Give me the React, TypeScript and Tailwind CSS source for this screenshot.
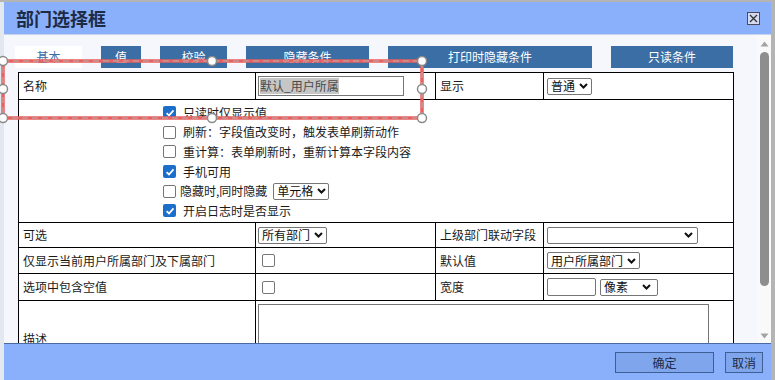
import React from 'react';

const Check: React.FC<{ on?: boolean }> = ({ on }) =>
    on ? (
        <span className="w-[13px] h-[13px] rounded-[2px] bg-[#1b6ec9] flex items-center justify-center shrink-0">
            <svg width="10" height="10" viewBox="0 0 10 10">
                <path d="M1.6 5.2 L4 7.5 L8.5 2.4" stroke="white" strokeWidth="1.8" fill="none" />
            </svg>
        </span>
    ) : (
        <span className="block w-[13px] h-[13px] rounded-[2px] bg-white border border-[#767676] shrink-0" />
    );

const Chevron: React.FC = () => (
    <svg width="9" height="6" viewBox="0 0 9 6" className="shrink-0">
        <path d="M1 1 L4.5 4.5 L8 1" stroke="#111" strokeWidth="2" fill="none" />
    </svg>
);

const Select: React.FC<{ label?: string; className?: string }> = ({ label, className }) => (
    <div className={`h-[17px] shrink-0 flex items-center justify-between gap-1 pl-[3px] pr-[4px] bg-white border border-[#767676] rounded-[2px] text-[12px] leading-none whitespace-nowrap text-[#111] ${className ?? ''}`}>
        <span>{label}</span>
        <Chevron />
    </div>
);

const tabs = [
    { t: '值', w: 'w-[40px]' },
    { t: '校验', w: 'w-[67px]' },
    { t: '隐藏条件', w: 'w-[123px]' },
    { t: '打印时隐藏条件', w: 'w-[204px]' },
    { t: '只读条件', w: 'w-[122px]' },
];

const SelectionOverlay: React.FC = () => {
    const handles = [
        [3, 61], [212, 61], [422, 61],
        [3, 89], [422, 89],
        [3, 118], [212, 118], [422, 118],
    ];
    return (
        <svg className="absolute inset-0 pointer-events-none" width="775" height="380">
            <rect x="3" y="61" width="419" height="57" fill="none" stroke="#e8605f" strokeWidth="3.5" />
            <rect x="3" y="61" width="419" height="57" fill="none" stroke="#b4b4b4" strokeWidth="1" strokeDasharray="6 4" />
            {handles.map(([x, y]) => (
                <circle key={`${x}-${y}`} cx={x} cy={y} r="4.5" fill="white" stroke="#8a8a8a" strokeWidth="1.5" />
            ))}
        </svg>
    );
};

const App: React.FC = () => {
    return (
        <div className="relative w-[775px] h-[380px] overflow-hidden bg-[#b4b4b4] font-['Noto_Sans_CJK_SC','Noto_Sans',sans-serif]">
            <div className="flex h-[378px] mt-[2px]">
                <div className="w-[4px] bg-[#e3e8f0]" />
                <div className="flex-1 flex flex-col">
                    {/* Header */}
                    <div className="h-[33px] shrink-0 flex items-center justify-between pl-[12px] pr-[11px] bg-[#8ab0fb] border-b border-[#c8d4ec]">
                        <span className="text-[18px] font-bold text-[#1e2b45] leading-none">部门选择框</span>
                        <span className="w-[13px] h-[13px] border border-[#4a4a5a] bg-[#d5daf0] flex items-center justify-center">
                            <svg width="9" height="9" viewBox="0 0 9 9">
                                <path d="M1 1 L8 8 M8 1 L1 8" stroke="#333" strokeWidth="1.3" />
                            </svg>
                        </span>
                    </div>

                    {/* Body */}
                    <div className="h-[308px] shrink-0 flex bg-[#f5f7fc]">
                        <div className="flex-1 overflow-hidden pt-[11px]">
                            <div className="flex gap-[19px] pl-[11px] h-[22px]">
                                <div className="w-[67px] bg-white flex items-center justify-center text-[12px] text-[#3a6ea5]">基本</div>
                                {tabs.map((tab) => (
                                    <div key={tab.t} className={`${tab.w} bg-[#3a6ea5] flex items-center justify-center text-[12px] text-white`}>
                                        {tab.t}
                                    </div>
                                ))}
                            </div>

                            <table className="mt-[4px] ml-[14px] w-[715px] table-fixed border-collapse bg-white text-[12px] text-[#1a1a1a] whitespace-nowrap">
                                <colgroup>
                                    <col className="w-[237px]" />
                                    <col className="w-[180px]" />
                                    <col className="w-[108px]" />
                                    <col className="w-[190px]" />
                                </colgroup>
                                <tbody>
                                    <tr className="h-[27px]">
                                        <td className="border border-black px-[4px]">名称</td>
                                        <td className="border border-black px-[2px]">
                                            <div className="w-[146px] h-[20px] border border-[#767676] flex items-center px-[1px]">
                                                <span className="bg-[#c6c6c6] text-[#4a4a4a] leading-[16px]">默认_用户所属</span>
                                            </div>
                                        </td>
                                        <td className="border border-black px-[4px]">显示</td>
                                        <td className="border border-black px-[3px]">
                                            <Select label="普通" className="w-[45px]" />
                                        </td>
                                    </tr>
                                    <tr className="h-[123px]">
                                        <td colSpan={4} className="border border-black align-top pt-[3px] pl-[144px]">
                                            {[
                                                { on: true, t: '只读时仅显示值' },
                                                { on: false, t: '刷新：字段值改变时，触发表单刷新动作' },
                                                { on: false, t: '重计算：表单刷新时，重新计算本字段内容' },
                                                { on: true, t: '手机可用' },
                                            ].map((c) => (
                                                <div key={c.t} className="h-[19.6px] flex items-center gap-[7px]">
                                                    <Check on={c.on} />
                                                    <span>{c.t}</span>
                                                </div>
                                            ))}
                                            <div className="h-[19.6px] flex items-center gap-[4px]">
                                                <Check />
                                                <span>隐藏时,同时隐藏</span>
                                                <Select label="单元格" className="w-[56px] ml-[2px]" />
                                            </div>
                                            <div className="h-[19.6px] flex items-center gap-[7px]">
                                                <Check on />
                                                <span>开启日志时是否显示</span>
                                            </div>
                                        </td>
                                    </tr>
                                    <tr className="h-[25px]">
                                        <td className="border border-black px-[4px]">可选</td>
                                        <td className="border border-black px-[2px]">
                                            <Select label="所有部门" className="w-[69px]" />
                                        </td>
                                        <td className="border border-black px-[4px]">上级部门联动字段</td>
                                        <td className="border border-black px-[3px]">
                                            <Select className="w-[151px]" />
                                        </td>
                                    </tr>
                                    <tr className="h-[26px]">
                                        <td className="border border-black px-[4px]">仅显示当前用户所属部门及下属部门</td>
                                        <td className="border border-black px-[6px]">
                                            <Check />
                                        </td>
                                        <td className="border border-black px-[4px]">默认值</td>
                                        <td className="border border-black px-[3px]">
                                            <Select label="用户所属部门" className="w-[93px]" />
                                        </td>
                                    </tr>
                                    <tr className="h-[27px]">
                                        <td className="border border-black px-[4px]">选项中包含空值</td>
                                        <td className="border border-black px-[6px]">
                                            <Check />
                                        </td>
                                        <td className="border border-black px-[4px]">宽度</td>
                                        <td className="border border-black px-[3px]">
                                            <div className="flex items-center gap-[4px]">
                                                <div className="w-[49px] h-[18px] bg-white border border-[#767676] rounded-[2px]" />
                                                <Select label="像素" className="w-[58px] pr-[6px]" />
                                            </div>
                                        </td>
                                    </tr>
                                    <tr className="h-[76px]">
                                        <td className="border border-black px-[4px]">描述</td>
                                        <td colSpan={3} className="border border-black align-top pt-[3px] px-[2px]">
                                            <div className="w-[451px] h-[64px] border border-[#767676] bg-white" />
                                        </td>
                                    </tr>
                                </tbody>
                            </table>
                        </div>

                        {/* Scrollbar */}
                        <div className="w-[14px] shrink-0 bg-[#f9f9fa] flex flex-col items-center pt-[6px] pb-[4px]">
                            <svg width="9" height="6" viewBox="0 0 9 6"><path d="M0.5 5.5 L4.5 0.5 L8.5 5.5 Z" fill="#a3a3a3" /></svg>
                            <div className="mt-[5px] w-[9px] h-[234px] rounded-full bg-[#8e8e8e]" />
                            <div className="flex-1" />
                            <svg width="9" height="6" viewBox="0 0 9 6"><path d="M0.5 0.5 L4.5 5.5 L8.5 0.5 Z" fill="#a3a3a3" /></svg>
                        </div>
                    </div>

                    {/* Footer */}
                    <div className="flex-1 flex items-start justify-end gap-[11px] pt-[8px] pr-[8px] bg-[#8ab0fb] border-t border-[#4b6aa1]">
                        <button className="w-[99px] h-[21px] bg-[#7fa5ec] border border-[#3d5f95] text-[12px] text-[#1e2b45] leading-none">确定</button>
                        <button className="w-[38px] h-[21px] bg-[#7fa5ec] border border-[#3d5f95] text-[12px] text-[#1e2b45] leading-none">取消</button>
                    </div>
                </div>
                <div className="w-[4px] bg-[#b4b4b4]" />
            </div>
            <SelectionOverlay />
        </div>
    );
};

export default App;
